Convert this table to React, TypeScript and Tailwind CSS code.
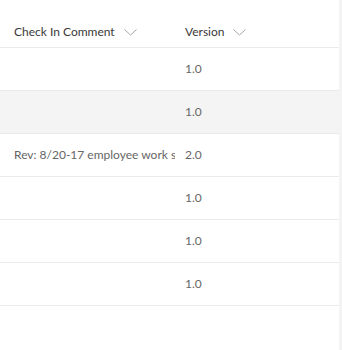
const rows = [
  { comment: '', version: '1.0' },
  { comment: '', version: '1.0', selected: true },
  { comment: 'Rev: 8/20-17 employee work schedule update', version: '2.0' },
  { comment: '', version: '1.0' },
  { comment: '', version: '1.0' },
  { comment: '', version: '1.0' },
];

function SortChevron() {
  return (
    <svg width="13" height="7" viewBox="0 0 13 7" className="ml-[9px] mt-[1px]" fill="none">
      <path d="M0.5 0.5L6.5 6L12.5 0.5" stroke="#a6a6a6" strokeWidth="1" />
    </svg>
  );
}

export default function App() {
  return (
    <div className="flex h-[350px] w-[342px] bg-white font-['Lato','Liberation_Sans',sans-serif]">
      <div className="flex-1">
        {/* column headers */}
        <div className="flex h-[48px] items-end border-b border-[#eaeaea] pb-[6px] text-[12px] text-[#3a3a3a]">
          <div className="flex w-[185px] items-center pl-[14px]">
            <span>Check In Comment</span>
            <SortChevron />
          </div>
          <div className="flex items-center">
            <span>Version</span>
            <SortChevron />
          </div>
        </div>
        {rows.map((r, i) => (
          <div
            key={i}
            className={`flex h-[43px] items-center border-b border-[#eaeaea] text-[12px] text-[#666] ${r.selected ? 'bg-[#f4f4f4]' : ''}`}
          >
            <div className="w-[185px] pl-[14px] pr-[10px]">
              <div className="overflow-hidden whitespace-nowrap">{r.comment}</div>
            </div>
            <div>{r.version}</div>
          </div>
        ))}
      </div>
      <div className="w-[3px] bg-[#f4f4f4]" />
    </div>
  );
}
